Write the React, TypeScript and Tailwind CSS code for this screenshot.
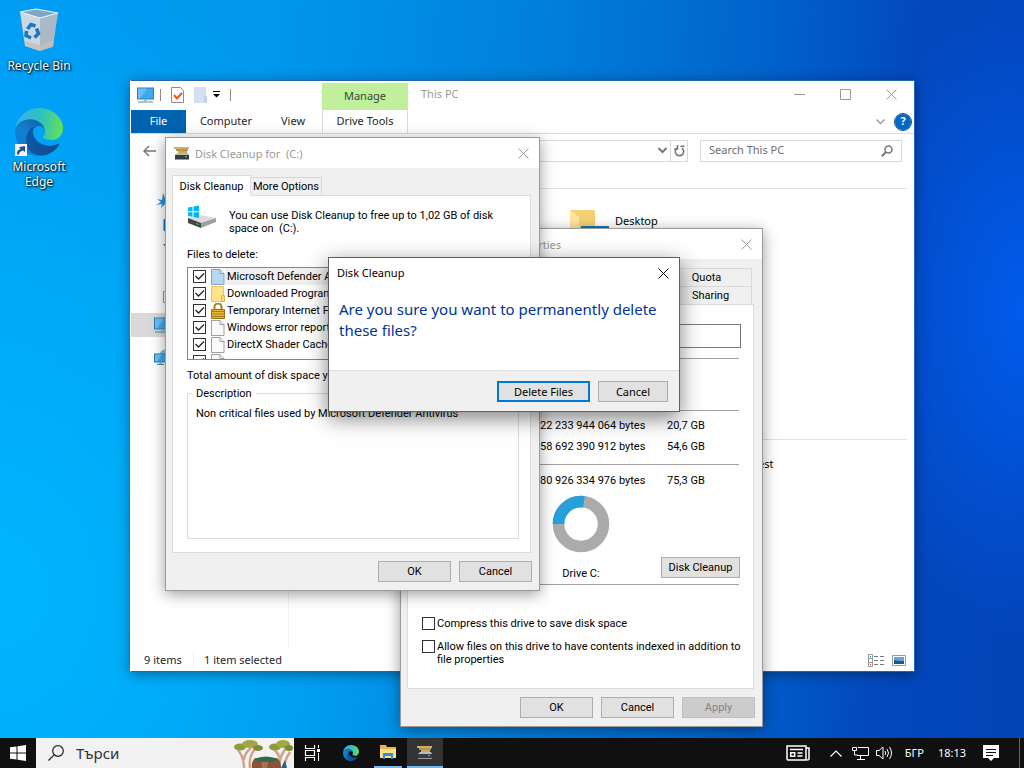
import React from 'react';

const F = "font-['Noto_Sans','Open_Sans',sans-serif]";

function CloseX({ className }: { className: string }) {
  return (
    <svg viewBox="0 0 11 11" className={`size-[11px] ${className}`} fill="none" stroke="currentColor">
      <path d="M.5.5l10 10M10.5.5l-10 10" />
    </svg>
  );
}

function EdgeLogo({ className, id }: { className: string; id: string }) {
  return (
    <svg viewBox="0 0 256 256" className={className}>
      <defs>
        <linearGradient id={`${id}a`} x1="63" y1="177" x2="241" y2="177" gradientUnits="userSpaceOnUse">
          <stop offset="0" stopColor="#0c59a4" />
          <stop offset="1" stopColor="#114a8b" />
        </linearGradient>
        <linearGradient id={`${id}b`} x1="150" y1="100" x2="40" y2="230" gradientUnits="userSpaceOnUse">
          <stop offset="0" stopColor="#1467b0" />
          <stop offset=".5" stopColor="#1180d0" />
          <stop offset="1" stopColor="#0a7bd4" />
        </linearGradient>
        <linearGradient id={`${id}c`} x1="20" y1="80" x2="250" y2="110" gradientUnits="userSpaceOnUse">
          <stop offset="0" stopColor="#35b4e8" />
          <stop offset=".5" stopColor="#2fc2bd" />
          <stop offset="1" stopColor="#62e05a" />
        </linearGradient>
      </defs>
      <path fill={`url(#${id}b)`} d="M105.700 241.400a79.200 79.200 0 0 1-22.700-21.300 80.700 80.700 0 0 1 29.500-120c3.200-1.500 8.500-4.100 15.600-4a32.400 32.400 0 0 1 25.700 13 31.900 31.900 0 0 1 6.300 18.700c0-.2 24.500-79.600-80-79.600-43.900 0-80 41.700-80 78.200a130.200 130.200 0 0 0 12.100 56 128 128 0 0 0 156.400 67.100 75.500 75.500 0 0 1-62.800-8z" />
      <path fill={`url(#${id}a)`} d="M231 190.500c-3.400 1.800-6.900 3.400-10.500 4.700a101.700 101.700 0 0 1-35.900 6.400c-47.300 0-88.500-32.500-88.500-74.300a31.500 31.500 0 0 1 16.400-27.300c-42.800 1.800-53.800 46.400-53.800 72.500 0 73.900 68.100 81.400 82.800 81.400 7.900 0 19.800-2.300 27-4.600l1.300-.4a128.300 128.300 0 0 0 66.600-52.800 4 4 0 0 0-5.400-5.600z" />
      <path fill={`url(#${id}c)`} d="M152.300 148.900c-.9 1-3.400 2.500-3.400 5.600 0 2.600 1.700 5.200 4.800 7.300 14.300 10 41.400 8.600 41.500 8.600a59.600 59.600 0 0 0 30.300-8.300 61.400 61.400 0 0 0 30.400-52.900c.3-22.400-8-37.300-11.300-43.900C223.500 23.900 177.700 0 128 0A128 128 0 0 0 0 126.200c.5-36.500 36.800-66 80-66 3.500 0 23.500.3 42 10a72.600 72.600 0 0 1 30.900 29.300c6.100 10.600 7.200 24.100 7.200 29.500s-2.700 13.300-7.800 19.900z" />
    </svg>
  );
}

function RecycleBin() {
  return (
    <svg viewBox="0 0 40 44" className="h-11 w-10">
      <path d="M1 4l5 34 15 5V9z" fill="#c9d8e2" />
      <path d="M39 5l-5 33-13 5V9z" fill="#a9bac6" />
      <path d="M1 4L17 1l22 4-18 5z" fill="#7fa7c4" stroke="#eaf4fa" strokeWidth="1.200" />
      <path d="M6 33l15 4 14-5-1 7-13 4-14-5z" fill="#c8bdb8" opacity=".8" />
      <g fill="none" stroke="#1976c9" strokeWidth="3.500">
        <path d="M8.500 21l3.500-4.500 4.500 1.500" />
        <path d="M17.500 20.500l2 5-4 4" />
        <path d="M12 30l-5-2.500.5-4.500" />
      </g>
    </svg>
  );
}

function Monitor({ className, globe }: { className: string; globe?: boolean }) {
  return (
    <svg viewBox="0 0 17 16" className={className}>
      {globe && <circle cx="11" cy="6" r="5.500" fill="#7fc3dc" />}
      <rect x=".5" y={globe ? 5 : 1} width={globe ? 12 : 16} height={globe ? 8 : 11} fill="#3fa9f0" stroke="#2b7cb5" />
      <path d={globe ? 'M1 5.500h7L3 12.500H1z' : 'M1 1.500h9L3 11.500H1z'} fill="#7ecbfa" opacity=".7" />
      <path d={globe ? 'M5 13h3v2H5z' : 'M7 12h3v2H7z'} fill="#9db6c6" />
      <path d={globe ? 'M3 15.500h7' : 'M1 15h15'} stroke="#4c88ac" />
    </svg>
  );
}

function CleanupIcon({ className }: { className: string }) {
  return (
    <svg viewBox="0 0 16 13" className={className}>
      <path d="M0 0h15v2H0z" fill="#cfae62" />
      <path d="M2 2h12v2H2z" fill="#b89448" />
      <path d="M4 4h9v2H4z" fill="#c9a95c" />
      <path d="M3 6h11l1 2H1z" fill="#b9bdbb" />
      <path d="M1 8h14v4H1z" fill="#3a3d3e" />
      <path d="M11 9h2v1h-2z" fill="#35e04e" />
      <path d="M1 12.500h14" stroke="#999" />
    </svg>
  );
}

function DriveIcon() {
  return (
    <svg viewBox="0 0 30 24" className="h-6 w-[30px]">
      <path d="M1 13l12-3 16 3-15 6z" fill="#dcdcde" />
      <path d="M1 13l13 5v5L1 18z" fill="#454545" />
      <path d="M14 18l15-5v4l-15 6z" fill="#a0a0a0" />
      <path d="M9 18l3 1v1l-3-1z" fill="#35d043" />
      <path d="M1 2.500l4.500-.8v4.600H1zM6.500 1.500L12 .5v5.800H6.500zM1 7.200h4.500v4.600L1 11zM6.500 7.200H12V13l-5.500-1z" fill="#00b7f1" />
    </svg>
  );
}

function FileIcon({ fill, stroke }: { fill: string; stroke: string }) {
  return (
    <svg viewBox="0 0 14 16" className="h-4 w-3.5 shrink-0">
      <path d="M.5.5h8.500l4 4v11H.5z" fill={fill} stroke={stroke} />
      <path d="M9 .5v4h4" fill="#fff" fillOpacity=".5" stroke={stroke} />
    </svg>
  );
}

function FolderFileIcon() {
  return (
    <svg viewBox="0 0 14 16" className="h-4 w-3.5 shrink-0">
      <path d="M.5.5h12v15H.5z" fill="#ffe28a" stroke="#e6c45e" />
      <path d="M10.500 9.500h3v6h-3z" fill="#ffd86a" stroke="#dcb74e" />
    </svg>
  );
}

function LockIcon() {
  return (
    <svg viewBox="0 0 14 16" className="h-4 w-3.5 shrink-0">
      <path d="M3.500 7V4a3.500 3.500 0 0 1 7 0v3" fill="none" stroke="#a88022" strokeWidth="2" />
      <path d="M.5 6.500h13v9H.5z" fill="#e8b632" stroke="#9a741b" />
      <path d="M1 8.500h12M1 11h12M1 13.500h12" stroke="#a87e1c" />
    </svg>
  );
}

function FolderIcon() {
  return (
    <svg viewBox="0 0 40 32" className="h-8 w-10">
      <path d="M0 1h25v28H0z" fill="#f4d273" />
      <path d="M0 1l9 7v23H0z" fill="#ffe7a0" />
      <path d="M11 17h28v12H11z" fill="#1473b5" />
    </svg>
  );
}

const btn =
  'flex h-[21px] items-center justify-center border border-[#adadad] bg-[#e1e1e1] text-[11px] leading-none text-black';

function DialogButton({ label, width, disabled }: { label: string; width: string; disabled?: boolean }) {
  return (
    <button
      type="button"
      disabled={disabled}
      className={`${btn} ${width} disabled:border-[#bfbfbf] disabled:bg-[#cccccc] disabled:text-[#838383]`}
    >
      {label}
    </button>
  );
}

const navIcons = [
  <path key="a" d="M7 0l2 5 6-1-4 4 3 5-5-2-4 4 1-4-6 1 5-3-4-3 5 1z" fill="#2a93dc" />,
  <path key="b" d="M8 2.500h8v11H8z" fill="#1797e6" stroke="#0f6db3" />,
  <path key="c" d="M7 3h9v6h-4z" fill="#2d77ae" />,
  <path key="d" d="M9.500 1.500h8v14h-8z" fill="#f2f2f2" stroke="#8c8c8c" />,
  <g key="e">
    <path d="M7.500 2.500h9v11h-9z" fill="#fff" stroke="#9a9a9a" />
    <path d="M9 4h7v8H9z" fill="#3f79ad" />
  </g>,
];

function Explorer() {
  return (
    <section className={`absolute left-[130px] top-20 flex h-[592px] w-[785px] flex-col border border-[#2166ae] border-l-white bg-white text-[11px] text-[#262626] shadow-[0_2px_12px_rgba(0,0,0,0.4)] ${F}`}>
      <header className="flex h-[29px] shrink-0 items-stretch pb-0.5">
        <div className="flex w-[191px] items-center gap-1.5 pl-1.5">
          <Monitor className="h-4 w-[17px]" />
          <span className="h-3 w-px bg-[#8c8c8c]" />
          <svg viewBox="0 0 13 16" className="ml-1 h-4 w-[13px]">
            <path d="M.5.500h9l3 3v12H.5z" fill="#fff" stroke="#8b8b8b" />
            <path d="M3 8l3 3.500L11 6" fill="none" stroke="#e2581c" strokeWidth="2" />
          </svg>
          <svg viewBox="0 0 13 16" className="ml-1 h-4 w-[13px]">
            <path d="M0 0h12v16H0z" fill="#d4dff2" />
            <path d="M10 9h3v7h-3z" fill="#c3d2ec" />
          </svg>
          <svg viewBox="0 0 7 7" className="size-[7px]"><path d="M0 .500h7" stroke="#000" /><path d="M0 3h7L3.500 6.500z" /></svg>
          <span className="ml-1 h-3 w-px bg-[#8c8c8c]" />
        </div>
        <div className="-mb-0.5 mt-0.5 flex w-[86px] items-center justify-center bg-[#c0f09c] text-[#3b4a33]">Manage</div>
        <h1 className="ml-[13px] flex-1 self-center text-[#999]">This PC</h1>
        <div className="flex items-center gap-[35px] pr-[17px] text-[#999]">
          <button type="button" aria-label="Minimize"><svg viewBox="0 0 11 11" className="size-[11px]"><path d="M0 5.500h11" stroke="#999" /></svg></button>
          <button type="button" aria-label="Maximize"><svg viewBox="0 0 11 11" className="size-[11px]"><path d="M.5.500h10v10H.5z" fill="none" stroke="#999" /></svg></button>
          <button type="button" aria-label="Close"><CloseX className="text-[#999]" /></button>
        </div>
      </header>
      <nav className="flex h-6 shrink-0 items-stretch border-b border-[#dadbdc]">
        <button type="button" className="w-[55px] bg-[#0063b1] text-white">File</button>
        <button type="button" className="w-20">Computer</button>
        <button type="button" className="w-[54px]">View</button>
        <button type="button" className="ml-0.5 w-[86px] border-x border-[#dadbdc]">Drive Tools</button>
        <span className="flex-1" />
        <svg viewBox="0 0 9 6" className="mr-2.5 h-1.5 w-[9px] self-center"><path d="M.5.500l4 4 4-4" fill="none" stroke="#999" strokeWidth="1.300" /></svg>
        <button type="button" aria-label="Help" className="mr-[3px] flex size-4 items-center justify-center self-center rounded-full bg-[#0067c5] text-[11px] font-bold text-white outline-1 outline-[#0a4d8c]">?</button>
      </nav>
      <div className="flex h-[33px] shrink-0 items-center gap-3 pr-3">
        <button type="button" aria-label="Back" className="ml-3"><svg viewBox="0 0 13 12" className="h-3 w-[13px]"><path d="M6 1L1 6l5 5M1 6h12" fill="none" stroke="#777" strokeWidth="1.500" /></svg></button>
        <div className="flex h-[22px] flex-1 items-center justify-end border border-[#d9d9d9]">
          <svg viewBox="0 0 9 7" className="mr-[3px] h-[7px] w-[9px]"><path d="M.5 1l4 4 4-4" fill="none" stroke="#777" strokeWidth="2" /></svg>
          <span className="flex h-full w-[17px] items-center justify-center border-l border-[#d9d9d9]">
            <svg viewBox="0 0 11 12" className="h-3 w-[11px]"><path d="M3 3.200a4.200 4.200 0 1 0 5 0M3.500 0v4H0M10.500 1.200H6.500" fill="none" stroke="#777" strokeWidth="1.600" /></svg>
          </span>
        </div>
        <label className="flex h-[22px] w-[202px] items-center border border-[#d9d9d9] px-2">
          <input aria-label="Search This PC" placeholder="Search This PC" className="min-w-0 flex-1 outline-none placeholder:text-[#6d6d6d]" />
          <svg viewBox="0 0 12 12" className="size-3"><circle cx="7.500" cy="4.500" r="3.500" fill="none" stroke="#777" strokeWidth="1.500" /><path d="M5 7L.8 11.200" stroke="#777" strokeWidth="2" /></svg>
        </label>
      </div>
      <div className="flex min-h-0 flex-1">
        <aside className="w-[158px] border-r border-[#f0f0f0] pt-[22px]">
          {navIcons.map((icon, i) => (
            <div key={i} className="flex h-6 items-center pl-[25px]"><svg viewBox="0 0 18 16" className="h-4 w-[18px]">{icon}</svg></div>
          ))}
          <div className="mt-1 flex h-6 items-center bg-[#d9d9d9] pl-[23px]"><Monitor className="h-4 w-[17px]" /></div>
          <div className="mt-2 flex h-6 items-center pl-[23px]"><Monitor className="h-4 w-[17px]" globe /></div>
        </aside>
        <main className="flex-1 pr-[7px]">
          <div className="mt-[21px] h-[252px] border-y border-[#e2e2e2] pl-[281px] pt-5">
            <div className="flex gap-[5px] text-black"><FolderIcon /><span className="leading-6">Desktop</span></div>
          </div>
          <p className="pl-[469px] pt-4 text-black">est</p>
        </main>
      </div>
      <footer className="flex h-6 shrink-0 items-center pl-[13px] pr-2 pt-0.5">
        <span className="w-[49px]">9 items</span>
        <span className="border-l border-[#f0f0f0] pl-2.5">1 item selected</span>
        <span className="flex-1" />
        <svg viewBox="0 0 40 13" className="h-[13px] w-10">
          <path d="M2.500.500h4v12h-4zM2.500 4.500h4M2.500 8.500h4" fill="none" stroke="#999" />
          <path d="M8 2.500h4m2 0h4M8 6.500h4m2 0h4M8 10.500h4m2 0h4" stroke="#777" />
          <path d="M4 2h1v1H4z" fill="#3379ad" /><path d="M4 10h1v1H4z" fill="#c33" />
          <path d="M26.500 1.500h13v10h-13z" fill="#fff" stroke="#999" />
          <path d="M28 3h10v4H28z" fill="#5aa4e8" /><path d="M28 6l5 1h5v3H28z" fill="#28566e" />
        </svg>
      </footer>
    </section>
  );
}

function Properties() {
  const check = 'size-[13px] shrink-0 appearance-none border border-[#333] bg-white';
  return (
    <section className="absolute left-[400px] top-[228px] flex h-[499px] w-[363px] flex-col border border-[#9a9a9a] bg-[#f0f0f0] font-['Roboto',sans-serif] text-[11px] leading-[13px] text-black shadow-[0_3px_14px_rgba(0,0,0,0.4)]">
      <header className={`flex h-[30px] shrink-0 items-center bg-white pl-[131px] pr-2.5 text-[11px] text-[#999] ${F}`}>
        <h2 className="flex-1">erties</h2>
        <button type="button" aria-label="Close"><CloseX className="text-[#999]" /></button>
      </header>
      <div className="ml-1.5 mr-2.5 mt-[9px] flex flex-col items-end">
        <button type="button" className="h-[18px] w-[91px] border border-b-0 border-[#d9d9d9]">Quota</button>
        <button type="button" className="h-[18px] w-[91px] border border-b-0 border-[#d9d9d9] pl-2">Sharing</button>
      </div>
      <div className="ml-1.5 mr-2 flex-1 border border-[#dcdcdc] bg-white px-3.5">
        <div className="-mr-0.5 pt-[19px]">
          <input aria-label="Drive label" className="block h-6 w-full border border-[#7a7a7a]" />
        </div>
        <hr className="mt-2.5 border-[#a0a0a0]" />
        <hr className="mt-[51px] border-[#a0a0a0]" />
        <table className="ml-[118px] mt-1 text-left">
          <tbody>
            <tr className="h-[21px]"><td className="w-[127px]">22 233 944 064 bytes</td><td>20,7 GB</td></tr>
            <tr className="h-[21px]"><td>58 692 390 912 bytes</td><td>54,6 GB</td></tr>
          </tbody>
        </table>
        <hr className="mt-[7px] border-[#a0a0a0]" />
        <table className="ml-[118px] mt-[5px] text-left">
          <tbody><tr className="h-[21px]"><td className="w-[127px]">80 926 334 976 bytes</td><td>75,3 GB</td></tr></tbody>
        </table>
        <div className="-mr-px flex h-[93px] items-start justify-between pl-[130px]">
          <div className="flex flex-col items-center">
            <svg viewBox="0 0 58 58" className="mt-1 size-[58px]">
              <circle cx="29" cy="29" r="22.500" fill="none" stroke="#ababab" strokeWidth="11.500" />
              <path d="M6.500 29A22.500 22.500 0 0 1 32 6.700" fill="none" stroke="#26a0da" strokeWidth="11.500" />
            </svg>
            <p className="mt-3.5">Drive C:</p>
          </div>
          <div className="self-end pb-1.5"><DialogButton label="Disk Cleanup" width="w-[79px]" /></div>
        </div>
        <hr className="border-[#a0a0a0]" />
        <label className="mt-8 flex items-center gap-0.5"><input type="checkbox" className={check} />Compress this drive to save disk space</label>
        <label className="-mr-3 mt-2.5 flex items-start gap-0.5"><input type="checkbox" className={check} /><span>Allow files on this drive to have contents indexed in addition to file properties</span></label>
      </div>
      <footer className="flex gap-2 self-end px-[7px] pb-2 pt-2">
        <DialogButton label="OK" width="w-[73px]" />
        <DialogButton label="Cancel" width="w-[73px]" />
        <DialogButton label="Apply" width="w-[73px]" disabled />
      </footer>
    </section>
  );
}

const files = [
  { name: 'Microsoft Defender Antivirus', icon: <FileIcon fill="#b8d8f2" stroke="#7fa6c8" /> },
  { name: 'Downloaded Program Files', icon: <FolderFileIcon /> },
  { name: 'Temporary Internet Files', icon: <LockIcon /> },
  { name: 'Windows error reports', icon: <FileIcon fill="#fafafa" stroke="#a0a0a0" /> },
  { name: 'DirectX Shader Cache', icon: <FileIcon fill="#fafafa" stroke="#a0a0a0" /> },
  { name: '', icon: <FileIcon fill="#fafafa" stroke="#a0a0a0" /> },
];

function DiskCleanup() {
  return (
    <section className="absolute left-[165px] top-[137px] flex h-[454px] w-[375px] flex-col border border-[#9a9a9a] bg-[#f0f0f0] font-['Roboto',sans-serif] text-[11px] leading-[13px] text-black shadow-[0_3px_14px_rgba(0,0,0,0.4)]">
      <header className={`flex h-[30px] shrink-0 items-center bg-white pl-2 pr-2.5 text-[11px] text-[#999] ${F}`}>
        <CleanupIcon className="h-[13px] w-4" />
        <h2 className="ml-[5px] flex-1 whitespace-pre">{'Disk Cleanup for  (C:)'}</h2>
        <button type="button" aria-label="Close"><CloseX className="text-[#999]" /></button>
      </header>
      <div className="mt-[7px] flex items-end pl-1.5">
        <button type="button" className="relative -mb-px h-[21px] w-[79px] border border-b-0 border-[#dcdcdc] bg-white">Disk Cleanup</button>
        <button type="button" className="h-[18px] w-[71px] border border-b-0 border-l-0 border-[#d9d9d9]">More Options</button>
      </div>
      <div className="ml-1.5 mr-2 flex-1 border border-[#dcdcdc] bg-white pl-3.5 pr-[11px] pt-[9px]">
        <div className="flex gap-3"><DriveIcon /><p className="mt-1 w-[270px]">You can use Disk Cleanup to free up to 1,02 GB of disk <span className="whitespace-pre">{'space on  (C:).'}</span></p></div>
        <p className="mt-[13px]">Files to delete:</p>
        <ul className="mt-1.5 h-[93px] overflow-hidden border border-[#828790]">
          {files.map((f, i) => (
            <li key={i} className="h-[17px]">
              <label className="flex h-full items-center pl-[5px]">
                <span className="relative mr-[5px] flex">
                  <input type="checkbox" defaultChecked className="size-[13px] appearance-none border border-[#333] bg-white" />
                  <svg viewBox="0 0 13 13" className="pointer-events-none absolute inset-0 size-[13px]"><path d="M2.500 6l3 3 5.500-5.500" fill="none" stroke="#222" strokeWidth="1.300" /></svg>
                </span>
                {f.icon}
                <span className={i === 0 ? 'flex h-full flex-1 items-center bg-[#f0f0f0] pl-0.5' : 'flex-1 pl-0.5'}>{f.name}</span>
              </label>
            </li>
          ))}
        </ul>
        <p className="mt-[9px]">Total amount of disk space you gain:</p>
        <fieldset className="mt-[5px] h-[152px] border border-[#dcdcdc] px-2">
          <legend className="-ml-1 px-1">Description</legend>
          <p className="mt-[7px]">Non critical files used by Microsoft Defender Antivirus</p>
        </fieldset>
      </div>
      <footer className="flex gap-2 self-end px-[7px] py-2">
        <DialogButton label="OK" width="w-[73px]" />
        <DialogButton label="Cancel" width="w-[73px]" />
      </footer>
    </section>
  );
}

function Confirm() {
  return (
    <section role="dialog" className={`absolute left-[328px] top-[257px] flex w-[352px] flex-col border border-[#5f5f5f] bg-white text-[11px] text-black shadow-[0_6px_20px_rgba(0,0,0,0.5)] ${F}`}>
      <header className="flex h-[30px] items-center pl-2 pr-2.5">
        <h2 className="flex-1">Disk Cleanup</h2>
        <button type="button" aria-label="Close"><CloseX className="text-black" /></button>
      </header>
      <p className="h-[82px] px-2.5 pt-[11px] text-[15px] leading-[21px] text-[#003399]">Are you sure you want to permanently delete these files?</p>
      <footer className="flex h-[41px] items-center justify-end gap-2 border-t border-[#dfdfdf] bg-[#f0f0f0] px-[11px]">
        <button type="button" className="h-[21px] w-[93px] border-2 border-[#0078d7] bg-[#e1e1e1] leading-none">Delete Files</button>
        <button type="button" className="h-[21px] w-[70px] border border-[#adadad] bg-[#e1e1e1] leading-none">Cancel</button>
      </footer>
    </section>
  );
}

function Taskbar() {
  return (
    <footer className={`flex h-[30px] shrink-0 items-stretch bg-[#101010] text-[11px] text-white ${F}`}>
      <button type="button" aria-label="Start" className="flex w-9 items-center justify-center">
        <svg viewBox="0 0 16 16" className="size-4"><path d="M0 2.300l6.500-.9v6.100H0zM7.500 1.200L16 0v7.500H7.500zM0 8.500h6.500v6.100L0 13.700zM7.500 8.500H16V16l-8.500-1.200z" fill="#fff" /></svg>
      </button>
      <label className="flex w-[258px] items-center bg-[#f2f2f2] pl-3">
        <svg viewBox="0 0 16 16" className="size-4"><circle cx="10" cy="6" r="5.300" fill="none" stroke="#222" strokeWidth="1.200" /><path d="M6.300 9.700L.5 15.500" stroke="#222" strokeWidth="1.200" /></svg>
        <input aria-label="Търси" placeholder="Търси" className="ml-3 min-w-0 flex-1 text-[15px] outline-none placeholder:text-[#333]" />
        <svg viewBox="0 0 60 30" className="h-[30px] w-[60px]">
          <path d="M10 30c0-8-2-13-6-18m6 10c0-5 2-8 7-12M16 30c-1-8 0-13 5-19" fill="none" stroke="#d0a489" strokeWidth="2.500" />
          <path d="M45 30c2-8 1-13-5-19m6 12c0-5 3-8 6-13M50 30c1-8 3-12 6-16" fill="none" stroke="#d0a489" strokeWidth="2.500" />
          <path d="M18 30c-1-5 1-9 4-10h20c4 1 5 6 5 10z" fill="#8a5238" />
          <path d="M28 30c-1-5 0-8 1-9h6l-2 9z" fill="#a8714f" />
          <path d="M20 21q12-5 24 0l-3 2q-10 2-18 0z" fill="#2f6a4f" />
          <ellipse cx="6" cy="9" rx="6" ry="3.500" fill="#8e9a3c" /><ellipse cx="16" cy="6" rx="8" ry="4" fill="#a0a844" /><ellipse cx="24" cy="10" rx="5" ry="3" fill="#7d8b37" />
          <ellipse cx="41" cy="9" rx="6" ry="3.500" fill="#8e9a3c" /><ellipse cx="49" cy="6" rx="7" ry="4" fill="#a0a844" /><ellipse cx="55" cy="10" rx="4" ry="3" fill="#7d8b37" />
          <path d="M47 30l4-8 2 8z" fill="#2f5d85" />
        </svg>
      </label>
      <button type="button" aria-label="Task view" className="flex w-9 items-center justify-center">
        <svg viewBox="0 0 17 16" className="h-4 w-[17px]" fill="none" stroke="#fff"><path d="M1.500 0v3.500h9V0M1.500 16v-3.500h9V16M1.500 5.500h9v5h-9z" strokeWidth="1.200" /><path d="M14.500 0v3M14.500 8v8" /><path d="M13 4h3v3h-3z" fill="#fff" stroke="none" /></svg>
      </button>
      <button type="button" aria-label="Edge" className="flex w-[42px] items-center justify-center"><EdgeLogo className="size-4" id="t" /></button>
      <button type="button" aria-label="File Explorer" className="ml-0.5 flex w-7 items-center justify-center border-b-2 border-[#76b9ed]">
        <svg viewBox="0 0 16 14" className="h-3.5 w-4"><path d="M0 0h6l1 2h9v11H0z" fill="#eab34b" /><path d="M0 4h16v9H0z" fill="#ffdf86" /><path d="M3 8h10v6h-2v-3H5v3H3z" fill="#2f8fdc" /></svg>
      </button>
      <button type="button" aria-label="Disk Cleanup" className="ml-[5px] flex w-9 items-center justify-center border-b-2 border-[#76b9ed] bg-[#333]"><CleanupIcon className="h-[13px] w-4" /></button>
      <span className="flex-1" />
      <div className="flex items-center">
        <svg viewBox="0 0 24 16" className="h-4 w-6" fill="none" stroke="#fff" strokeWidth="1.500"><path d="M1 1h19v14H2q-1 0-1-1zM20 3h3v11q0 1-2 1" /><path d="M4 4.500h13M11.500 8h5M11.500 11h5" /><path d="M4.700 7.700h4v3.600h-4z" /></svg>
        <svg viewBox="0 0 12 7" className="ml-5 h-[7px] w-3"><path d="M.5 6.500l5.500-5.500 5.500 5.500" fill="none" stroke="#fff" strokeWidth="1.200" /></svg>
        <svg viewBox="0 0 17 14" className="ml-2.5 h-3.5 w-[17px]" fill="none" stroke="#fff"><path d="M6 1.500h10.500v8H5M8.500 9.500v4M5 13.500h8M.5 1.500h4v3h-4zM2.500 4.500V9h3" /></svg>
        <svg viewBox="0 0 17 14" className="ml-[7px] h-3.5 w-[17px]" fill="none" stroke="#fff"><path d="M.5 4.500h2.500l4-3.500v12L3 9.500H.5zM9 5q1.500 2 0 4M11 3q3 4 0 8M13.500 1q4 6 0 12" /></svg>
        <span className="ml-3">БГР</span>
        <time className="ml-3.5">18:13</time>
        <svg viewBox="0 0 16 16" className="ml-[17px] h-4 w-4"><path d="M0 0h16v13h-5l-3 3-3-3H0z" fill="#fff" /><path d="M3 4.500h10M3 7.500h10M3 10.500h7" stroke="#101010" /></svg>
        <span className="ml-5 h-full w-px bg-[#666]" />
        <span className="w-1" />
      </div>
    </footer>
  );
}

export default function App() {
  return (
    <div className="flex h-screen flex-col overflow-hidden">
      <div className="relative min-h-0 flex-1 overflow-hidden bg-[radial-gradient(ellipse_170px_330px_at_100%_42%,rgba(0,96,245,0.85),transparent),radial-gradient(ellipse_520px_620px_at_0%_80%,rgba(0,184,255,0.9),transparent),linear-gradient(94deg,#009cf5_0%,#0098ee_25%,#0080dc_50%,#0062cc_72%,#0348bd_86%,#0343b8_100%)]">
        <div className={`flex w-[78px] flex-col items-center pt-2 text-center text-xs leading-[15px] text-white [text-shadow:1px_1px_2px_#000,0_0_2px_#000] ${F}`}>
          <RecycleBin />
          <span className="mt-1.5 whitespace-nowrap">Recycle Bin</span>
          <span className="relative mt-[35px]">
            <EdgeLogo className="size-12" id="d" />
            <svg viewBox="0 0 12 12" className="absolute bottom-0 left-0 size-3"><path d="M0 0h12v12H0z" fill="#f6f6f6" /><path d="M2 10.500Q1.500 6 5.500 5L4 3l6-1v6L8 6.500Q4 7.500 4 10.500z" fill="#234f9a" /></svg>
          </span>
          <span className="mt-[3px]">Microsoft Edge</span>
        </div>
        <Explorer />
        <Properties />
        <DiskCleanup />
        <Confirm />
      </div>
      <Taskbar />
    </div>
  );
}
